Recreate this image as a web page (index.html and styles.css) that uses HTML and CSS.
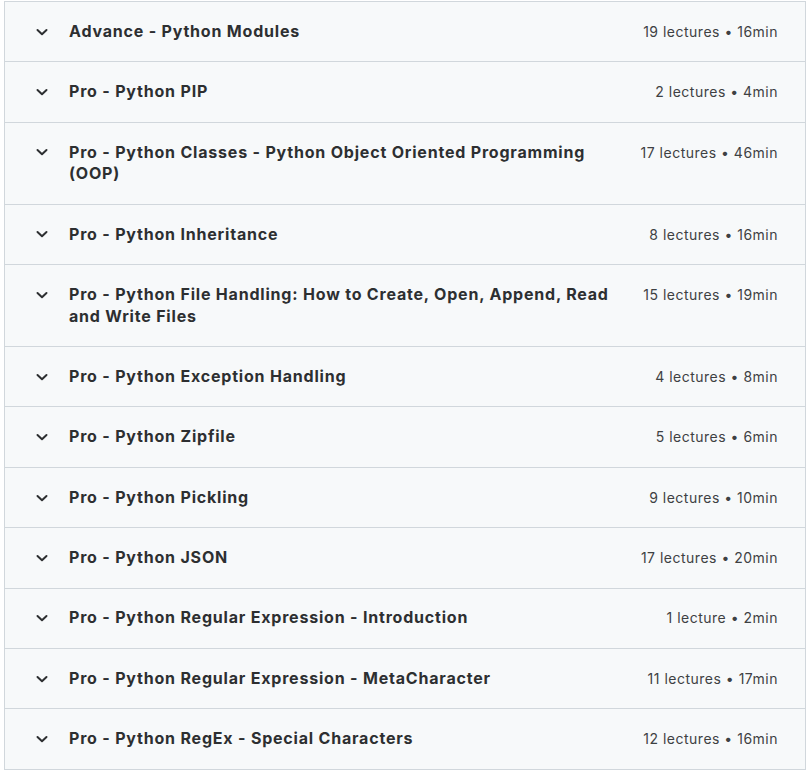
FILE: index.html
```html
<!DOCTYPE html>
<html>
<head>
<meta charset="utf-8">
<link rel="stylesheet" href="styles.css">
</head>
<body>
<div class="curriculum">
  <div class="section"><span class="chev"><svg viewBox="0 0 16 16" width="16" height="16"><path d="M3.5 6l4.5 4.2L12.5 6" /></svg></span><span class="title">Advance - Python Modules</span><span class="meta">19 lectures • 16min</span></div>
  <div class="section"><span class="chev"><svg viewBox="0 0 16 16" width="16" height="16"><path d="M3.5 6l4.5 4.2L12.5 6" /></svg></span><span class="title">Pro - Python PIP</span><span class="meta">2 lectures • 4min</span></div>
  <div class="section"><span class="chev"><svg viewBox="0 0 16 16" width="16" height="16"><path d="M3.5 6l4.5 4.2L12.5 6" /></svg></span><span class="title">Pro - Python Classes - Python Object Oriented Programming (OOP)</span><span class="meta">17 lectures • 46min</span></div>
  <div class="section"><span class="chev"><svg viewBox="0 0 16 16" width="16" height="16"><path d="M3.5 6l4.5 4.2L12.5 6" /></svg></span><span class="title">Pro - Python Inheritance</span><span class="meta">8 lectures • 16min</span></div>
  <div class="section"><span class="chev"><svg viewBox="0 0 16 16" width="16" height="16"><path d="M3.5 6l4.5 4.2L12.5 6" /></svg></span><span class="title">Pro - Python File Handling: How to Create, Open, Append, Read and Write Files</span><span class="meta">15 lectures • 19min</span></div>
  <div class="section"><span class="chev"><svg viewBox="0 0 16 16" width="16" height="16"><path d="M3.5 6l4.5 4.2L12.5 6" /></svg></span><span class="title">Pro - Python Exception Handling</span><span class="meta">4 lectures • 8min</span></div>
  <div class="section"><span class="chev"><svg viewBox="0 0 16 16" width="16" height="16"><path d="M3.5 6l4.5 4.2L12.5 6" /></svg></span><span class="title">Pro - Python Zipfile</span><span class="meta">5 lectures • 6min</span></div>
  <div class="section"><span class="chev"><svg viewBox="0 0 16 16" width="16" height="16"><path d="M3.5 6l4.5 4.2L12.5 6" /></svg></span><span class="title">Pro - Python Pickling</span><span class="meta">9 lectures • 10min</span></div>
  <div class="section"><span class="chev"><svg viewBox="0 0 16 16" width="16" height="16"><path d="M3.5 6l4.5 4.2L12.5 6" /></svg></span><span class="title">Pro - Python JSON</span><span class="meta">17 lectures • 20min</span></div>
  <div class="section"><span class="chev"><svg viewBox="0 0 16 16" width="16" height="16"><path d="M3.5 6l4.5 4.2L12.5 6" /></svg></span><span class="title">Pro - Python Regular Expression - Introduction</span><span class="meta">1 lecture • 2min</span></div>
  <div class="section"><span class="chev"><svg viewBox="0 0 16 16" width="16" height="16"><path d="M3.5 6l4.5 4.2L12.5 6" /></svg></span><span class="title">Pro - Python Regular Expression - MetaCharacter</span><span class="meta">11 lectures • 17min</span></div>
  <div class="section"><span class="chev"><svg viewBox="0 0 16 16" width="16" height="16"><path d="M3.5 6l4.5 4.2L12.5 6" /></svg></span><span class="title">Pro - Python RegEx - Special Characters</span><span class="meta">12 lectures • 16min</span></div>
</div>
</body>
</html>
```
FILE: styles.css
```css
html, body {
  margin: 0;
  padding: 0;
  background: #ffffff;
}
body {
  font-family: Inter, "Liberation Sans", sans-serif;
  color: #2d2f31;
}
.curriculum {
  margin: 1px 5px 0 4px;
  border: 1px solid #d1d7dc;
  border-bottom: none;
}
.section {
  display: flex;
  align-items: flex-start;
  background: #f7f9fa;
  border-bottom: 1px solid #d1d7dc;
  padding: 18.9px 27px 18.9px 29px;
}
.chev {
  flex: 0 0 16px;
  height: 21.6px;
  display: flex;
  align-items: center;
  margin-right: 19px;
}
.chev svg {
  fill: none;
  stroke: #2d2f31;
  stroke-width: 2;
  stroke-linecap: round;
  stroke-linejoin: round;
}
.title {
  flex: 1 1 auto;
  font-size: 16px;
  font-weight: 700;
  line-height: 21.6px;
  letter-spacing: 0.8px;
}
.meta {
  flex: 0 0 auto;
  margin-left: 20px;
  font-size: 14px;
  line-height: 21.6px;
  letter-spacing: 0.5px;
  color: #3e4143;
  white-space: nowrap;
}
```
